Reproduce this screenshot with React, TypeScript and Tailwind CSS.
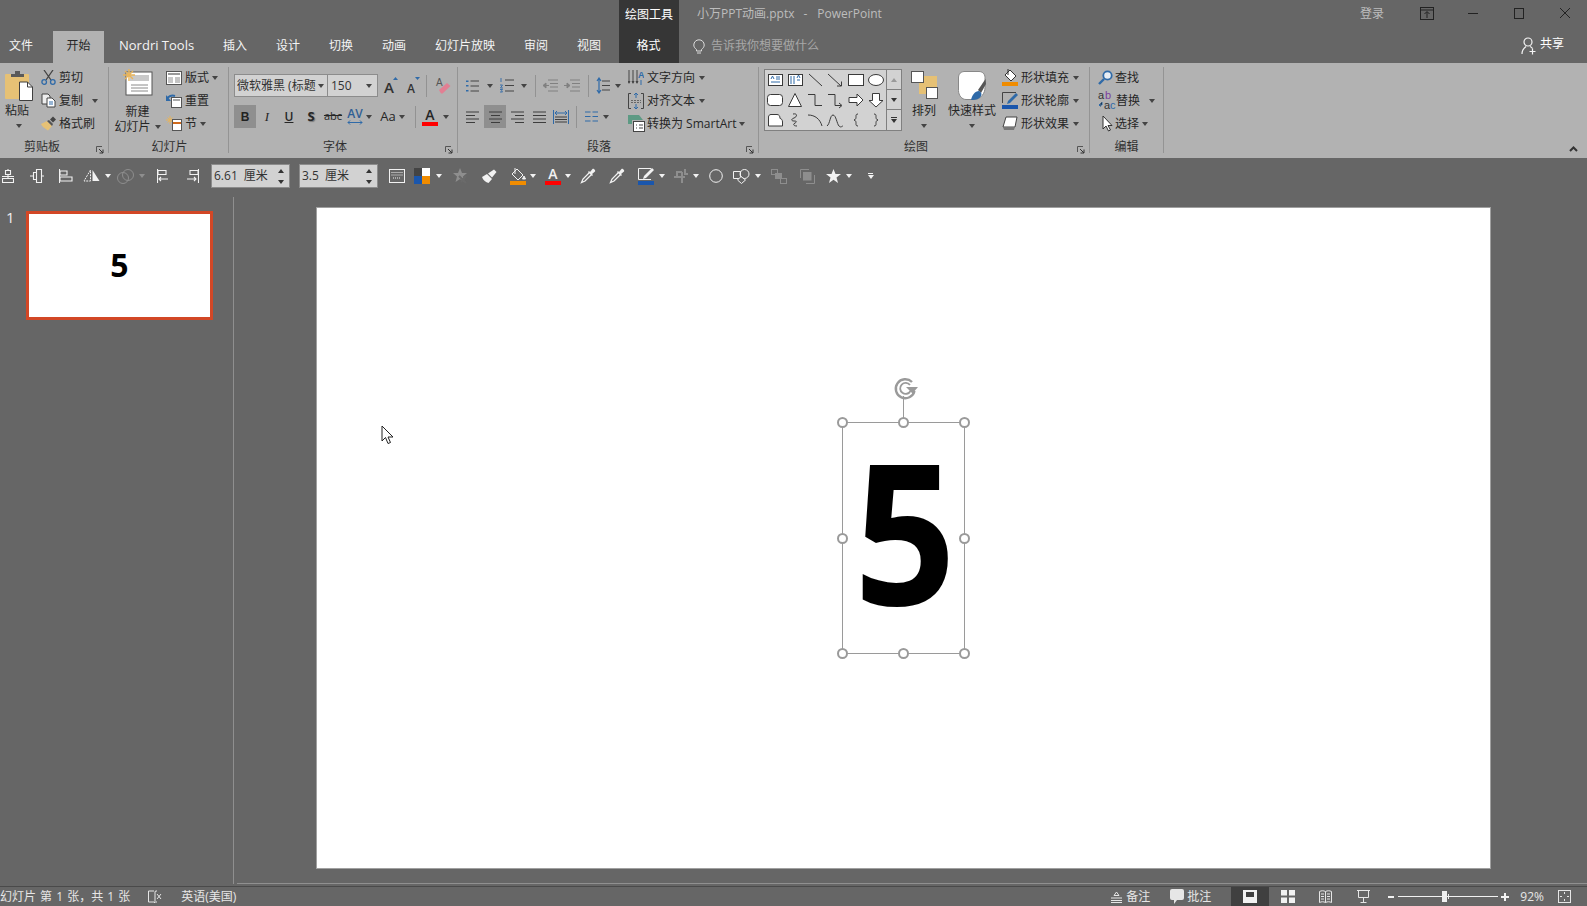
import React from "react";

type P = { className?: string };
const D = "#3f3f3f";
const B = "#2f6aa8";
const T = "#e6c175";

const Caret = ({ className = "" }: P) => (
  <svg className={`w-[6px] h-[4px] shrink-0 ${className}`} viewBox="0 0 6 4"><path d="M0 0h6L3 4z" fill="currentColor" /></svg>
);
const Sep = ({ className = "" }: P) => <div className={`w-px h-[22px] bg-[#929292] shrink-0 ${className}`} />;

const Ic = ({ className = "", w, h, children }: P & { w: number; h: number; children: React.ReactNode }) => (
  <svg className={`shrink-0 ${className}`} viewBox={`0 0 ${w} ${h}`} fill="none">{children}</svg>
);

/* ---------- ribbon icons ---------- */
const Clipboard = () => (
  <Ic w={28} h={30} className="w-[28px] h-[30px]">
    <rect x="0" y="3" width="24" height="25" rx="1" fill={T} />
    <path d="M6 6V3h4V0h5v3h4v3z" fill="#5a5a5a" />
    <path d="M14.5 11h8l5 5v13.5h-13z" fill="#fff" stroke={D} />
    <path d="M22.5 11v5h5" stroke={D} />
  </Ic>
);
const Scissors = () => (
  <Ic w={15} h={15} className="w-[15px] h-[15px]">
    <path d="M3 0l7 10M12 0L5 10" stroke="#444" strokeWidth="1.3" />
    <circle cx="3.2" cy="12" r="2.3" stroke={B} strokeWidth="1.3" />
    <circle cx="11.8" cy="12" r="2.3" stroke={B} strokeWidth="1.3" />
  </Ic>
);
const Copy = () => (
  <Ic w={15} h={15} className="w-[15px] h-[15px]">
    <path d="M1 1h6l2 2v8H1z" fill="#eee" stroke="#444" />
    <path d="M6 5h5l3 3v6H6z" fill="#fff" stroke="#444" />
    <path d="M8 9h4M8 11h4" stroke={B} />
  </Ic>
);
const Painter = () => (
  <Ic w={16} h={15} className="w-[16px] h-[15px]">
    <path d="M0 8l6-3 5 5-4 4.5C5 13 1 11 0 8z" fill={T} />
    <path d="M6 5l5 5 1-2-4-4z" fill="#555" />
    <path d="M9 3.5l3-3 3 3-3 3z" fill="#444" />
  </Ic>
);
const NewSlide = () => (
  <Ic w={30} h={27} className="w-[30px] h-[27px]">
    <rect x="3" y="3" width="26" height="23" fill="#fff" stroke="#555" />
    <rect x="7" y="6" width="19" height="6" fill="#c9c9c9" />
    <path d="M8 16h17M8 19h17M8 22h17" stroke="#8a8a8a" />
    <path d="M6 0v12M0 6h12M2 2l8 8M10 2l-8 8" stroke="#e8b45a" strokeWidth="1.4" />
  </Ic>
);
const Layout = () => (
  <Ic w={16} h={14} className="w-[16px] h-[14px]">
    <rect x=".5" y=".5" width="15" height="13" fill="#fff" stroke="#555" />
    <path d="M2 3h12" stroke="#999" strokeWidth="2" />
    <path d="M2 6h5v6H2z" fill="#c8c8c8" />
    <path d="M9 7h5M9 9h5M9 11h5" stroke="#888" />
  </Ic>
);
const Reset = () => (
  <Ic w={16} h={14} className="w-[16px] h-[14px]">
    <rect x="5.5" y="3.5" width="10" height="10" fill="#fff" stroke="#555" />
    <path d="M7 6h7" stroke="#aaa" strokeWidth="2" />
    <path d="M1 5c1-3 5-4 8-3" stroke={B} strokeWidth="2" />
    <path d="M0 1v6h5z" fill={B} />
  </Ic>
);
const Section = () => (
  <Ic w={16} h={15} className="w-[16px] h-[15px]">
    <path d="M4 0v8M0 4h8M1.500 1.500l5 5M6.500 1.500l-5 5" stroke="#e8b45a" />
    <rect x="6.500" y="3.500" width="9" height="11" fill="#fff" stroke="#555" />
    <path d="M7 7h8" stroke="#d06a1c" strokeWidth="2" />
  </Ic>
);
const GrowA = ({ up = true, small = false }: { up?: boolean; small?: boolean }) => (
  <div className={`relative shrink-0 text-[#333] ${small ? "w-[12px] text-[12px]" : "w-[13px] text-[15px]"} font-semibold leading-none flex items-end h-[19px]`}>
    A
    <svg className="absolute right-[-1px] top-[1px] w-[5px] h-[3px]" viewBox="0 0 5 3"><path d={up ? "M0 3h5L2.500 0z" : "M0 0h5L2.500 3z"} fill={B} /></svg>
  </div>
);
const Eraser = () => (
  <Ic w={16} h={17} className="w-[16px] h-[17px]">
    <text x="1" y="9" fontSize="10" fill="#555" fontFamily="Liberation Sans">A</text>
    <path d="M4 13l8-7 3.500 3-8 7.500H6z" fill="#e27f93" />
  </Ic>
);
const Bullets = () => (
  <Ic w={13} h={14} className="w-[13px] h-[14px]">
    <path d="M0 1.500h2.500V3H0zM0 6h2.500v1.500H0zM0 11h2.500v1.500H0z" fill={B} />
    <path d="M4.500 2h8.500M4.500 7h8.500M4.500 12h8.500" stroke="#444" />
  </Ic>
);
const Numbered = () => (
  <Ic w={14} h={15} className="w-[14px] h-[15px]">
    <path d="M1 0v4M0 7h2.500l-2 3h2.500M0 11.500h2.500l-1 1.300 1 1.200H0" stroke={B} strokeWidth=".9" />
    <path d="M5 2h9M5 7.500h9M5 13h9" stroke="#444" />
  </Ic>
);
const Indent = ({ flip = false }: { flip?: boolean }) => (
  <Ic w={16} h={13} className="w-[16px] h-[13px]">
    <path d="M6 1h10M8 4.500h8M8 8h8M6 12h10" stroke="#808080" />
    {flip ? <path d="M0 6.500h5M3 4l3 2.500-3 2.500z" stroke="#808080" fill="#808080" /> : <path d="M2 6.500h5M4 4L1 6.500 4 9z" stroke="#808080" fill="#808080" />}
  </Ic>
);
const Spacing = () => (
  <Ic w={14} h={17} className="w-[14px] h-[17px]">
    <path d="M3 1v15M1 4l2-3 2 3M1 13l2 3 2-3" stroke={B} strokeWidth="1.200" />
    <path d="M6 4h8M6 8.500h8M6 13h8" stroke="#444" />
  </Ic>
);
const Align = ({ kind }: { kind: "l" | "c" | "r" | "j" }) => {
  const d = {
    l: "M0 1h13M0 4.500h9M0 8h13M0 11.500h9",
    c: "M0 1h13M2 4.500h9M0 8h13M2 11.500h9",
    r: "M0 1h13M4 4.500h9M0 8h13M4 11.500h9",
    j: "M0 1h13M0 4.500h13M0 8h13M0 11.500h13",
  }[kind];
  return <Ic w={13} h={12} className="w-[13px] h-[12px]"><path d={d} stroke="#3d3d3d" /></Ic>;
};
const Distribute = () => (
  <Ic w={16} h={14} className="w-[16px] h-[14px]">
    <path d="M.500 0v14M15.500 0v14" stroke={B} />
    <path d="M2 3h12M4 1l-2 2 2 2M12 1l2 2-2 2" stroke={B} />
    <path d="M2 7h12M2 9.500h12M2 12h12" stroke="#3d3d3d" />
  </Ic>
);
const Columns = () => (
  <Ic w={13} h={11} className="w-[13px] h-[11px]">
    <path d="M0 1h5.500M7.500 1H13M0 5.500h5.500M7.500 5.500H13M0 10h5.500M7.500 10H13" stroke={B} strokeWidth="1.200" />
  </Ic>
);
const TextDir = () => (
  <Ic w={16} h={16} className="w-[16px] h-[16px]">
    <path d="M1 0v13M5 0v13M9 0v13" stroke="#444" />
    <path d="M-.500 11L1 14l1.500-3M3.500 11L5 14l1.500-3M7.500 11L9 14l1.500-3" fill="#444" />
    <text x="10" y="8" fontSize="9" fontWeight="700" fill={B} fontFamily="Liberation Sans">A</text>
    <path d="M13 10v5" stroke={B} />
  </Ic>
);
const TextAlign = () => (
  <Ic w={16} h={16} className="w-[16px] h-[16px]">
    <path d="M3 .500H.500v15H3M13 .500h2.500v15H13" stroke="#444" />
    <path d="M3 7.500h10M3 9.500h10" stroke="#666" strokeDasharray="2 1" />
    <path d="M8 0v5M6 2l2-2 2 2M8 16v-5M6 14l2 2 2-2" stroke={B} />
  </Ic>
);
const SmartArt = () => (
  <Ic w={17} h={17} className="w-[17px] h-[17px]">
    <path d="M0 0h11l4 5H0z" fill="#5d9a84" />
    <path d="M0 5h4v4H0z" fill="#5d9a84" />
    <rect x="5.500" y="6.500" width="11" height="10" fill="#fff" stroke="#444" />
    <path d="M8 10h1M11 10h4M8 13h1M11 13h4" stroke="#444" />
  </Ic>
);
const Arrange = () => (
  <Ic w={27} h={28} className="w-[27px] h-[28px]">
    <rect x="8" y="5" width="18" height="18" fill={T} />
    <rect x=".5" y=".5" width="12" height="11" fill="#fff" stroke="#555" />
    <rect x="15.500" y="16.500" width="11" height="11" fill="#fff" stroke="#555" />
  </Ic>
);
const QuickStyle = () => (
  <Ic w={28} h={30} className="w-[28px] h-[30px]">
    <path d="M6 .5h15c3 0 6 2 6 6v10c0 6-4 11-10 12H8c-4 0-7.500-4-7.500-9V6C.5 3 3 .5 6 .5z" fill="#fff" stroke="#888" />
    <path d="M27.500 8L20 19l3 3 5-9z" fill="#555" />
    <path d="M13 29c1-5 4-9 8-9 2.500 1 3 3 2 5-1.500 3-5 4-10 4z" fill={B} />
  </Ic>
);
const ShapeFill = () => (
  <Ic w={16} h={17} className="w-[16px] h-[17px]">
    <path d="M8 1l6 6-5 5-6-6z" fill="#fff" stroke="#333" />
    <path d="M6 0v6" stroke="#333" />
    <rect y="13" width="16" height="4" fill="#f08c00" />
  </Ic>
);
const ShapeLine = () => (
  <Ic w={16} h={17} className="w-[16px] h-[17px]">
    <path d="M14 .5H.5V11" stroke="#444" />
    <path d="M14 1L6 9l-1 3 3-1 8-8z" fill={B} />
    <rect y="13" width="16" height="4" fill="#1a56ac" />
  </Ic>
);
const ShapeEffect = () => (
  <Ic w={16} h={15} className="w-[16px] h-[15px]">
    <path d="M4 1h11l-2 10H1z" fill="#fff" stroke="#444" />
    <path d="M1 11h12l-1 3H2z" fill="#777" />
  </Ic>
);
const Find = () => (
  <Ic w={15} h={15} className="w-[15px] h-[15px]">
    <circle cx="9.500" cy="5.500" r="4.200" fill="#e8eef5" stroke={B} strokeWidth="1.800" />
    <path d="M6 9l-5 5" stroke={B} strokeWidth="2.400" />
  </Ic>
);
const Replace = () => (
  <div className="relative w-[17px] h-[19px] shrink-0 text-[11px] leading-[9px] font-['Liberation_Sans',sans-serif]">
    <span className="absolute left-0 top-0 text-[#333]">a</span>
    <span className="absolute left-[7px] top-0 text-[#7a3ea0]">b</span>
    <span className="absolute left-[6px] top-[10px] text-[#333]">a</span>
    <span className="absolute left-[12px] top-[10px] text-[#2f6aa8]">c</span>
    <svg className="absolute left-0 top-[11px] w-[5px] h-[6px]" viewBox="0 0 5 6"><path d="M4 0v3H1M2.500 1.500L1 3l1.500 1.500" stroke={B} /></svg>
  </div>
);
const Pointer = () => (
  <Ic w={11} h={17} className="w-[11px] h-[17px]">
    <path d="M1 1v13l3-3 2.500 5 2-1L6 10.500h4z" fill="#fff" stroke="#333" />
  </Ic>
);
const Launcher = () => (
  <svg className="absolute right-[4px] -bottom-[1px] w-[8px] h-[8px]" viewBox="0 0 8 8" fill="none">
    <path d="M.5 6V.5H6" stroke="#555" />
    <path d="M3 3l4 4M7 3.500V7H3.500" stroke="#333" />
  </svg>
);

/* ---------- gallery ---------- */
const gs = { stroke: "#3a3a3a", fill: "#fff" };
const shapes: React.ReactNode[] = [
  <><rect x="3.500" y="4.500" width="14" height="11" {...gs} /><path d="M6 9l1.500-3L9 9M11 7h4M11 9h4M6 12h9" stroke="#2f6aa8" /></>,
  <><rect x="3.500" y="4.500" width="14" height="11" {...gs} /><path d="M6 6v8M9 6v8M12 8l1.500-3L15 8M12 10h3" stroke="#2f6aa8" /></>,
  <path d="M4 4l13 12" stroke="#3a3a3a" />,
  <><path d="M3 4l13 12" stroke="#3a3a3a" /><path d="M12 16h4.500v-4.500" stroke="#3a3a3a" /></>,
  <rect x="2.500" y="4.500" width="15" height="11" {...gs} />,
  <ellipse cx="10" cy="10" rx="7.500" ry="5.500" {...gs} />,
  <rect x="2.500" y="4.500" width="15" height="11" rx="3" {...gs} />,
  <path d="M10 3.500l6.500 13h-13z" {...gs} />,
  <path d="M3 4.500h7v11h7" stroke="#3a3a3a" />,
  <><path d="M3 4.500h7v11h6" stroke="#3a3a3a" /><path d="M14 13l3 2.500-3 2.500" stroke="#3a3a3a" /></>,
  <path d="M3 7.500h8V4l6 6-6 6v-3.500H3z" {...gs} />,
  <path d="M6.500 3.500h7v7H17l-7 6.500-7-6.500h3.500z" {...gs} />,
  <path d="M3.500 16V7c0-1.500 1-2.500 2.500-2.500h6c2 0 3 1.500 3 4 1 0 2.500 1 2.500 3.500v4z" {...gs} />,
  <path d="M8 4c5-1 4 3 1 4-3 1-3 3 0 3s3 1 1 2-2 3 2 3" stroke="#3a3a3a" />,
  <path d="M3 5c7 0 12 4 14 11" stroke="#3a3a3a" />,
  <path d="M2 16c3-2 3-11 6-11s4 9 6 11 3 0 4 0" stroke="#3a3a3a" />,
  <path d="M12 4c-2 0-2 1-2 2.500S10 9.500 8 10c2 .5 2 2 2 3.500s0 2.500 2 2.500" stroke="#3a3a3a" />,
  <path d="M8 4c2 0 2 1 2 2.500s0 3 2 3.500c-2 .5-2 2-2 3.500s0 2.500-2 2.500" stroke="#3a3a3a" />,
];

/* ---------- format-bar icons ---------- */
const W = "#f2f2f2";
const G = "#8e8e8e";
const AlignIcon = ({ d, className, vb = 14 }: { d: string; className: string; vb?: number }) => (
  <Ic w={vb} h={14} className={className}><path d={d} stroke={W} strokeWidth="1.100" /></Ic>
);
const Dropper = ({ className }: { className: string }) => (
  <Ic w={16} h={16} className={className}>
    <path d="M9.500 4.500L3 11l-1.500 3.500L5 13l6.500-6.500" stroke={W} strokeWidth="1.300" />
    <path d="M9 3l1 1 2.500-3c1-1 3.500 1.500 2.500 2.500L12 6l1 1-1 1-4-4z" fill={W} />
  </Ic>
);
const Txt = ({ className = "", children }: P & { children: React.ReactNode }) => <span className={`whitespace-nowrap ${className}`}>{children}</span>;

const Row = ({ className = "", children }: P & { children: React.ReactNode }) => (
  <div className={`flex items-center ${className}`}>{children}</div>
);

const Group = ({ w, label, labelClass = "", launcher = false, children }: { w: string; label: string; labelClass?: string; launcher?: boolean; children: React.ReactNode }) => (
  <div className={`relative flex flex-col shrink-0 h-[86px] border-r border-[#949494] ${w}`}>
    <div className="flex h-[70px]">{children}</div>
    <div className={`h-[16px] pt-[1px] leading-[17px] text-center text-[12px] text-[#303030] ${labelClass}`}>{label}</div>
    {launcher && <Launcher />}
  </div>
);

const Handle = ({ className }: { className: string }) => (
  <div className={`absolute w-[11px] h-[11px] rounded-full bg-white border-2 border-[#9a9a9a] ${className}`} />
);

const Spin = () => (
  <div className="flex flex-col gap-[7px]"><Caret className="rotate-180 text-[#333] w-[5px] h-[3px]" /><Caret className="text-[#333] w-[5px] h-[3px]" /></div>
);

export default function App() {
  return (
    <div className="flex flex-col w-[1587px] h-[906px] overflow-hidden bg-[#666666] text-[12px] font-['Open_Sans','Noto_Sans_CJK_SC',sans-serif]">
      {/* title row */}
      <div className="flex h-[31px] shrink-0">
        <div className="w-[619px] shrink-0" />
        <div className="w-[60px] bg-[#363636] text-white text-center leading-[29px]">绘图工具</div>
        <div className="ml-[18px] leading-[28px] text-[#bdbdbd] whitespace-pre">
          <span>小万PPT动画.pptx</span><span className="ml-[9px]">-</span><span className="ml-[10px]">PowerPoint</span>
        </div>
        <div className="ml-auto flex items-start text-[#bdbdbd]">
          <span className="leading-[27px]">登录</span>
          <svg className="ml-[36px] mt-[7px] w-[14px] h-[13px]" viewBox="0 0 14 13" fill="none"><rect x=".5" y=".5" width="13" height="12" stroke="#222" /><path d="M1 3h12" stroke="#222" /><path d="M7 11V5M4.500 7L7 4.500 9.500 7" stroke="#222" /></svg>
          <svg className="ml-[34px] mt-[13px] w-[10px] h-[1px]" viewBox="0 0 10 1"><path d="M0 .5h10" stroke="#222" /></svg>
          <svg className="ml-[36px] mt-[8px] w-[10px] h-[11px]" viewBox="0 0 10 11" fill="none"><rect x=".5" y=".5" width="9" height="10" stroke="#222" /></svg>
          <svg className="ml-[36px] mr-[17px] mt-[8px] w-[10px] h-[10px]" viewBox="0 0 10 10" fill="none"><path d="M0 0l10 10M10 0L0 10" stroke="#222" /></svg>
        </div>
      </div>

      {/* tab row */}
      <div className="flex h-[32px] shrink-0 text-[#f4f4f4] leading-[29px]">
        <div className="w-[53px] pl-[9px]">文件</div>
        <div className="w-[51px] bg-[#b2b2b2] text-[#262626] text-center">开始</div>
        <div className="ml-[15px] w-[75px] text-[13px] whitespace-nowrap">Nordri Tools</div>
        <div className="ml-[29px] w-[24px]">插入</div>
        <div className="ml-[29px] w-[24px]">设计</div>
        <div className="ml-[29px] w-[24px]">切换</div>
        <div className="ml-[29px] w-[24px]">动画</div>
        <div className="ml-[29px] w-[60px]">幻灯片放映</div>
        <div className="ml-[29px] w-[24px]">审阅</div>
        <div className="ml-[29px] w-[24px]">视图</div>
        <div className="ml-[18px] w-[60px] pr-[1px] bg-[#363636] text-center text-white">格式</div>
        <svg className="ml-[14px] mt-[8px] w-[12px] h-[16px]" viewBox="0 0 12 16" fill="none"><path d="M3.500 10.500C1.500 9 .8 7.500.8 6A5.200 5.200 0 0 1 11.200 6c0 1.500-.7 3-2.700 4.500v1.500h-5z" stroke="#dcdcdc" /><path d="M4 14h4" stroke="#dcdcdc" /></svg>
        <div className="ml-[6px] text-[#a8a8a8]">告诉我你想要做什么</div>
        <div className="ml-auto flex items-start text-white pr-[23px]">
          <svg className="mt-[6px] w-[15px] h-[18px]" viewBox="0 0 15 18" fill="none"><circle cx="7" cy="5" r="4" stroke="#f4f4f4" strokeWidth="1.200" /><path d="M1 17c0-4 2-6 4-7.500M9 9.500c1 .5 2 1.200 2.500 2" stroke="#f4f4f4" strokeWidth="1.200" /><path d="M11.500 11.500v6M8.500 14.500h6" stroke="#f4f4f4" strokeWidth="1.200" /></svg>
          <span className="ml-[4px] leading-[26px]">共享</span>
        </div>
      </div>

      {/* ribbon */}
      <div className="relative flex h-[95px] shrink-0 pt-[4px] bg-[#b2b2b2] text-[#262626]">
        <Group w="w-[109px]" label="剪贴板" labelClass="pr-[24px]" launcher>
          <div className="flex flex-col items-start w-[39px] pl-[5px] mt-[4px]">
            <Clipboard />
            <span className="mt-[1px] leading-[17px]">粘贴</span>
            <Caret className="mt-[5px] ml-[11px] text-[#444]" />
          </div>
          <div className="flex flex-col -mt-[1px] ml-[2px]">
            <Row className="h-[23px]"><Scissors /><Txt className="ml-[3px]">剪切</Txt></Row>
            <Row className="h-[23px]"><Copy /><Txt className="ml-[3px]">复制</Txt><Caret className="ml-[9px] text-[#444]" /></Row>
            <Row className="h-[23px]"><Painter /><Txt className="ml-[2px]">格式刷</Txt></Row>
          </div>
        </Group>

        <Group w="w-[120px]" label="幻灯片" labelClass="pl-[2px]">
          <div className="flex flex-col items-center w-[57px] mt-[2px]">
            <NewSlide />
            <span className="mt-[7px] leading-[17px]">新建</span>
            <div className="flex items-center leading-[15px] mt-[-1px]">幻灯片<Caret className="ml-[4px] text-[#444]" /></div>
          </div>
          <div className="flex flex-col -mt-[1px]">
            <Row className="h-[23px]"><Layout /><Txt className="ml-[3px]">版式</Txt><Caret className="ml-[3px] text-[#444]" /></Row>
            <Row className="h-[23px]"><Reset /><Txt className="ml-[3px]">重置</Txt></Row>
            <Row className="h-[23px]"><Section /><Txt className="ml-[3px]">节</Txt><Caret className="ml-[3px] text-[#444]" /></Row>
          </div>
        </Group>

        <Group w="w-[229px]" label="字体" labelClass="pr-[16px]" launcher>
          <div className="flex flex-col pl-[5px] pt-[7px]">
            <Row className="h-[23px]">
              <div className="flex items-center w-[94px] h-[23px] pl-[2px] pr-[3px] bg-[#d2d2d2] border border-[#8c8c8c] overflow-hidden">
                <span className="flex-1 overflow-hidden whitespace-nowrap text-[12px] text-[#333]">微软雅黑 (标题</span><Caret className="text-[#444]" />
              </div>
              <div className="flex items-center w-[50px] h-[23px] pl-[3px] pr-[5px] bg-[#d2d2d2] border border-[#8c8c8c] border-l-0">
                <span className="flex-1 text-[#333]">150</span><Caret className="text-[#444]" />
              </div>
              <div className="ml-[6px]"><GrowA /></div>
              <div className="ml-[10px]"><GrowA up={false} small /></div>
              <Sep className="ml-[7px]" />
              <div className="ml-[8px]"><Eraser /></div>
            </Row>
            <Row className="h-[23px] mt-[8px]">
              <div className="w-[22px] h-[23px] bg-[#8f8f8f] flex items-center justify-center font-bold font-['Liberation_Sans',sans-serif] text-[#222]">B</div>
              <div className="w-[22px] text-center italic font-['Liberation_Serif',serif] text-[13px]">I</div>
              <div className="w-[22px] text-center underline font-semibold">U</div>
              <div className="w-[22px] text-center font-bold text-[13px] [text-shadow:1px_1px_1px_#777]">S</div>
              <div className="w-[22px] text-center line-through text-[11px]">abc</div>
              <div className="w-[22px] flex flex-col items-center">
                <span className="leading-[12px] text-[12px] font-semibold text-[#2f5f95]">AV</span>
                <svg className="w-[16px] h-[5px]" viewBox="0 0 16 5" fill="none"><path d="M1 2.500h14M3 .5l-2 2 2 2M13 .5l2 2-2 2" stroke={B} /></svg>
              </div>
              <Caret className="text-[#444]" />
              <div className="ml-[5px] w-[22px] text-center text-[13px]">Aa</div>
              <Caret className="text-[#444]" />
              <Sep className="ml-[10px]" />
              <div className="ml-[6px] w-[16px] flex flex-col items-center">
                <span className="leading-[14px] text-[14px] font-semibold">A</span>
                <div className="w-[16px] h-[4px] bg-[#f00]" />
              </div>
              <Caret className="ml-[5px] text-[#444]" />
            </Row>
          </div>
        </Group>

        <Group w="w-[301px]" label="段落" labelClass="pr-[18px]" launcher>
          <div className="flex flex-col pt-[7px] w-[163px] shrink-0">
            <Row className="h-[23px]">
              <div className="ml-[8px]"><Bullets /></div>
              <Caret className="ml-[8px] text-[#444]" />
              <div className="ml-[7px]"><Numbered /></div>
              <Caret className="ml-[7px] text-[#444]" />
              <Sep className="ml-[8px]" />
              <div className="ml-[6px]"><Indent /></div>
              <div className="ml-[6px]"><Indent flip /></div>
              <Sep className="ml-[8px]" />
              <div className="ml-[7px]"><Spacing /></div>
              <Caret className="ml-[5px] text-[#444]" />
            </Row>
            <Row className="h-[23px] mt-[8px]">
              <div className="ml-[8px]"><Align kind="l" /></div>
              <div className="ml-[5px] w-[22px] h-[23px] bg-[#8f8f8f] flex items-center justify-center"><Align kind="c" /></div>
              <div className="ml-[5px]"><Align kind="r" /></div>
              <div className="ml-[9px]"><Align kind="j" /></div>
              <div className="ml-[7px]"><Distribute /></div>
              <Sep className="ml-[7px]" />
              <div className="ml-[8px]"><Columns /></div>
              <Caret className="ml-[5px] text-[#444]" />
            </Row>
          </div>
          <div className="flex flex-col -mt-[1px] ml-[7px]">
            <Row className="h-[23px]"><TextDir /><Txt className="ml-[3px]">文字方向</Txt><Caret className="ml-[4px] text-[#444]" /></Row>
            <Row className="h-[23px]"><TextAlign /><Txt className="ml-[3px]">对齐文本</Txt><Caret className="ml-[4px] text-[#444]" /></Row>
            <Row className="h-[23px]"><SmartArt /><Txt className="ml-[2px]">转换为 SmartArt</Txt><Caret className="ml-[3px] text-[#444]" /></Row>
          </div>
        </Group>

        <Group w="w-[331px]" label="绘图" labelClass="pr-[16px]" launcher>
          <div className="flex ml-[5px] mt-[2px] w-[138px] h-[62px] bg-[#d2d2d2] border border-[#808080] shrink-0">
            <div className="grid grid-cols-6 grid-rows-3 w-[121px]">
              {shapes.map((s, i) => (
                <svg key={i} className="w-[20px] h-[20px]" viewBox="0 0 20 20" fill="none">{s}</svg>
              ))}
            </div>
            <div className="flex flex-col flex-1 border-l border-[#808080]">
              <div className="flex items-center justify-center h-[20px] border-b border-[#808080]"><Caret className="rotate-180 text-[#9a9a9a]" /></div>
              <div className="flex items-center justify-center h-[20px] border-b border-[#808080]"><Caret className="text-[#333]" /></div>
              <div className="flex flex-col items-center justify-center flex-1"><div className="w-[6px] h-px bg-[#333] mb-[1px]" /><Caret className="text-[#333]" /></div>
            </div>
          </div>
          <div className="flex flex-col items-center w-[40px] ml-[2px] mt-[4px]">
            <Arrange />
            <span className="mt-[3px] leading-[17px]">排列</span>
            <Caret className="mt-[5px] text-[#444]" />
          </div>
          <div className="flex flex-col items-center w-[48px] ml-[4px] mt-[4px]">
            <QuickStyle />
            <span className="mt-[1px] leading-[17px] whitespace-nowrap">快速样式</span>
            <Caret className="mt-[5px] text-[#444]" />
          </div>
          <div className="flex flex-col -mt-[1px] ml-[6px]">
            <Row className="h-[23px]"><ShapeFill /><Txt className="ml-[3px]">形状填充</Txt><Caret className="ml-[4px] text-[#444]" /></Row>
            <Row className="h-[23px]"><ShapeLine /><Txt className="ml-[3px]">形状轮廓</Txt><Caret className="ml-[4px] text-[#444]" /></Row>
            <Row className="h-[23px]"><ShapeEffect /><Txt className="ml-[3px]">形状效果</Txt><Caret className="ml-[4px] text-[#444]" /></Row>
          </div>
        </Group>

        <Group w="w-[74px]" label="编辑">
          <div className="flex flex-col -mt-[1px] ml-[8px]">
            <Row className="h-[23px]"><Find /><Txt className="ml-[2px]">查找</Txt></Row>
            <Row className="h-[23px]"><Replace /><Txt className="ml-[1px]">替换</Txt><Caret className="ml-[9px] text-[#444]" /></Row>
            <Row className="h-[23px] pl-[4px]"><Pointer /><Txt className="ml-[2px]">选择</Txt><Caret className="ml-[3px] text-[#444]" /></Row>
          </div>
        </Group>
        <svg className="absolute right-[9px] bottom-[6px] w-[9px] h-[6px]" viewBox="0 0 9 6" fill="none"><path d="M1 5l3.500-3.500L8 5" stroke="#333" strokeWidth="2" /></svg>
      </div>

      {/* format bar */}
      <div className="flex items-center h-[39px] pb-[3px] shrink-0 text-[#f2f2f2]">
        <AlignIcon vb={12} className="ml-[2px] w-[12px] h-[14px]" d="M3.500 1.500h5v4h-5zM6 0v1.500M.5 9.500h11v4H.5zM6 5.500v4M0 7.500h12" />
        <AlignIcon className="ml-[16px] w-[14px] h-[14px]" d="M0 7h3M3.500 3.500h3v7h-3zM6.500 .5h5v13h-5zM11.500 7H14" />
        <AlignIcon className="ml-[15px] w-[14px] h-[14px]" d="M.5 0v14M1 2h7v4H1zM1 8h12v4H1z" />
        <Ic w={17} h={14} className="ml-[10px] w-[17px] h-[14px]">
          <path d="M7.500 1L1 12h6.500z" stroke={W} strokeDasharray="2 1" />
          <path d="M9.500 1L16.500 12h-7z" fill={W} />
        </Ic>
        <Caret className="ml-[5px]" />
        <Ic w={17} h={15} className="ml-[6px] w-[17px] h-[15px]">
          <circle cx="6" cy="9" r="5.500" stroke={G} /><circle cx="11" cy="6" r="5.500" stroke={G} />
        </Ic>
        <Caret className="ml-[5px] text-[#8e8e8e]" />
        <AlignIcon vb={11} className="ml-[12px] w-[11px] h-[14px]" d="M.5 0v14M1 1.500h8v4H1zM11 10H2M4 8l-2 2 2 2" />
        <AlignIcon vb={12} className="ml-[19px] w-[12px] h-[14px]" d="M11.500 0v14M11 1.500H3v4h8zM0 10h9M7 8l2 2-2 2" />
        <div className="ml-[12px] flex items-center w-[79px] h-[24px] pl-[2px] pr-[5px] bg-[#d2d2d2] border border-[#8c8c8c] text-[#333]">
          <span className="flex-1 whitespace-pre [word-spacing:3px]">6.61 厘米</span>
          <Spin />
        </div>
        <div className="ml-[9px] flex items-center w-[79px] h-[24px] pl-[2px] pr-[5px] bg-[#d2d2d2] border border-[#8c8c8c] text-[#333]">
          <span className="flex-1 whitespace-pre [word-spacing:3px]">3.5 厘米</span>
          <Spin />
        </div>
        <Ic w={16} h={14} className="ml-[11px] w-[16px] h-[14px]">
          <rect x=".5" y=".5" width="15" height="13" stroke={W} />
          <path d="M2.500 3.500h11M2.500 6h11M4 9h8" stroke={W} strokeDasharray="1 1" />
        </Ic>
        <Ic w={16} h={16} className="ml-[9px] w-[16px] h-[16px]">
          <rect width="8" height="8" fill="#444" /><rect x="8" width="8" height="8" fill="#fff" />
          <rect y="8" width="8" height="8" fill="#1a56ac" /><rect x="8" y="8" width="8" height="8" fill="#f08c00" />
        </Ic>
        <Caret className="ml-[6px]" />
        <Ic w={16} h={16} className="ml-[10px] w-[16px] h-[16px]">
          <path d="M8 0l2 5h5l-4 3.500L12.500 14 8 11l-4.500 3L5 8.500 1 5h5z" fill={G} />
          <path d="M7 8l7 7M14 8l-5 6" stroke="#6a6a6a" strokeWidth="2" />
        </Ic>
        <Ic w={15} h={14} className="ml-[14px] w-[15px] h-[14px]">
          <path d="M0 8l5-3 5 5-3.500 4C4 13.500 1 11 0 8z" fill={W} />
          <path d="M6 4.500l4 4L14.500 3 12 .5z" fill={W} />
        </Ic>
        <Ic w={16} h={17} className="ml-[13px] w-[16px] h-[17px]">
          <path d="M7 1l6 6-5 5-6-6z" stroke={W} /><path d="M5 0v6M14 8l1.500 3h-3z" stroke={W} fill={W} />
          <rect y="13" width="16" height="4" fill="#f08c00" />
        </Ic>
        <Caret className="ml-[4px]" />
        <div className="ml-[9px] w-[16px] flex flex-col items-center">
          <span className="leading-[14px] text-[14px] font-semibold text-[#f2f2f2]">A</span>
          <div className="w-[16px] h-[4px] bg-[#f00]" />
        </div>
        <Caret className="ml-[4px]" />
        <Dropper className="ml-[9px] w-[16px] h-[16px]" />
        <Dropper className="ml-[13px] w-[16px] h-[16px]" />
        <Ic w={16} h={17} className="ml-[13px] w-[16px] h-[17px]">
          <path d="M13 .5H.5V11.500H13" stroke={W} /><path d="M14 0l2 2-8 8-3 1 1-3z" fill={W} />
          <rect y="13" width="16" height="4" fill="#1a56ac" />
        </Ic>
        <Caret className="ml-[5px]" />
        <Ic w={14} h={14} className="ml-[9px] w-[14px] h-[14px]">
          <path d="M0 8h11M8 3v11M3 8V3h5" stroke={G} strokeWidth="2" />
          <path d="M11 0v5h3" stroke={G} strokeWidth="2" />
        </Ic>
        <Caret className="ml-[5px]" />
        <Ic w={14} h={14} className="ml-[10px] w-[14px] h-[14px]"><circle cx="7" cy="7" r="6.300" stroke={W} /></Ic>
        <Ic w={17} h={15} className="ml-[10px] w-[17px] h-[15px]">
          <path d="M.5 2.500h7v7h-7z" stroke={W} /><circle cx="11.500" cy="5" r="4.500" stroke={W} /><path d="M8 7.500l4.500 3.500-4 3.500-4-3.500z" fill="#666" stroke={W} />
        </Ic>
        <Caret className="ml-[5px]" />
        <Ic w={16} h={15} className="ml-[10px] w-[16px] h-[15px]">
          <rect x=".5" y=".5" width="6" height="5" stroke={G} /><rect x="4.500" y="4.500" width="6" height="5" fill={G} stroke={G} /><rect x="9.500" y="9.500" width="6" height="5" stroke={G} />
        </Ic>
        <Ic w={15} h={15} className="ml-[13px] w-[15px] h-[15px]">
          <path d="M.5 9V.5H9" stroke={G} /><rect x="3" y="3" width="8.500" height="8.500" fill={G} /><path d="M14.500 6v8.500H6" stroke={G} />
        </Ic>
        <Ic w={15} h={14} className="ml-[11px] w-[15px] h-[14px]">
          <path d="M7.500 0l2 5h5.500l-4.500 3.500L12 14 7.500 10.800 3 14l1.500-5.500L0 5h5.500z" fill={W} />
        </Ic>
        <Caret className="ml-[5px]" />
        <div className="ml-[16px] flex flex-col items-center w-[5px]"><div className="w-[5px] h-px bg-[#f2f2f2] mb-[1px]" /><Caret className="w-[5px]" /></div>
      </div>

      {/* main */}
      <div className="flex flex-1 min-h-0">
        <div className="flex w-[234px] shrink-0 h-[687px] border-r border-[#8f8f8f] pt-[13px]">
          <div className="w-[26px] pl-[6px] text-[15px] leading-[14px] text-[#efefef]">1</div>
          <div className="flex items-center justify-center w-[187px] h-[109px] mt-[1px] bg-white border-[3px] border-[#d24726]">
            <span className="font-bold text-[32px] leading-none text-black mb-[2px]">5</span>
          </div>
        </div>
        <div className="flex flex-col flex-1 min-w-0">
          <div className="relative mt-[10px] ml-[82px] w-[1175px] h-[662px] bg-white border border-[#a0a0a0] shrink-0">
            <svg className="absolute left-[64px] top-[217px] w-[13px] h-[20px]" viewBox="0 0 13 20" fill="none">
              <path d="M1 1v15l3.500-3.500L7 18.500l2.500-1L7 12h5z" fill="#fff" stroke="#222" />
            </svg>
            <div className="absolute left-[525px] top-[214px] w-[123px] h-[232px] border border-[#9a9a9a] flex items-center justify-center">
              <span className="font-bold text-[196px] leading-none text-black ml-[4px] mb-[18px] scale-x-[0.91]">5</span>
              <Handle className="-left-[6px] -top-[6px]" />
              <Handle className="left-[55px] -top-[6px]" />
              <Handle className="-right-[6px] -top-[6px]" />
              <Handle className="-left-[6px] top-[110px]" />
              <Handle className="-right-[6px] top-[110px]" />
              <Handle className="-left-[6px] -bottom-[6px]" />
              <Handle className="left-[55px] -bottom-[6px]" />
              <Handle className="-right-[6px] -bottom-[6px]" />
              <div className="absolute left-[60px] -top-[27px] w-px h-[22px] bg-[#9a9a9a]" />
              <svg className="absolute left-[50px] -top-[46px] w-[26px] h-[24px]" viewBox="0 0 26 24" fill="none">
                <path d="M19 5a9.500 9.500 0 1 0 2.500 9" stroke="#9a9a9a" strokeWidth="2.400" />
                <path d="M17 8a5.500 5.500 0 1 0 .5 6" stroke="#9a9a9a" strokeWidth="1.800" />
                <path d="M13 10h12l-5.500 6.500z" fill="#9a9a9a" />
              </svg>
            </div>
          </div>
          <div className="mt-auto mb-[2px] ml-[3px] h-px bg-[#909090] shrink-0" />
        </div>
      </div>

      {/* status bar */}
      <div className="flex items-center h-[20px] shrink-0 border-t border-[#4a4a4a] text-[#e6e6e6] whitespace-pre">
        <span className="[word-spacing:1px]">幻灯片 第 1 张，共 1 张</span>
        <svg className="ml-[18px] w-[14px] h-[13px]" viewBox="0 0 14 13" fill="none"><path d="M6 1H.5v11H6l1 1V1.500M7 1.500L8 1h1M8 12h1" stroke="#e6e6e6" /><path d="M9 4l4 5M13 4L9 9" stroke="#e6e6e6" /></svg>
        <span className="ml-[19px]">英语(美国)</span>
        <svg className="ml-auto w-[11px] h-[12px]" viewBox="0 0 11 12" fill="none"><path d="M3 4.500L5.500 1 8 4.500zM0 7h11M0 9.500h11M0 11.500h11" stroke="#e6e6e6" /></svg>
        <span className="ml-[4px]">备注</span>
        <svg className="ml-[20px] w-[14px] h-[15px]" viewBox="0 0 14 15"><path d="M2 0h10a2 2 0 0 1 2 2v7a2 2 0 0 1-2 2H7l-3 4v-4H2a2 2 0 0 1-2-2V2a2 2 0 0 1 2-2z" fill="#e6e6e6" /></svg>
        <span className="ml-[3px]">批注</span>
        <div className="ml-[20px] flex items-center justify-center w-[38px] h-[19px] bg-[#404040]">
          <svg className="w-[14px] h-[13px]" viewBox="0 0 14 13"><path d="M0 0h14v13H0z" fill="#f2f2f2" /><path d="M3 2h8v5H3z" fill="#404040" /></svg>
        </div>
        <svg className="ml-[12px] w-[14px] h-[13px]" viewBox="0 0 14 13"><path d="M0 0h6v5.500H0zM8 0h6v5.500H8zM0 7.500h6V13H0zM8 7.500h6V13H8z" fill="#f2f2f2" /></svg>
        <svg className="ml-[24px] w-[13px] h-[13px]" viewBox="0 0 13 13" fill="none"><path d="M.5 1.500c2-1 4-1 6 0 2-1 4-1 6 0v11c-2-1-4-1-6 0-2-1-4-1-6 0zM6.500 1.500v11M2 4h3M2 6.500h3M2 9h3M8 4h3M8 6.500h3M8 9h3" stroke="#e6e6e6" /></svg>
        <svg className="ml-[25px] w-[13px] h-[13px]" viewBox="0 0 13 13" fill="none"><path d="M0 .5h13M1.500 1v6.500h10V1M6.500 8v4M3.500 12.500h6" stroke="#e6e6e6" /></svg>
        <div className="ml-[18px] w-[6px] h-[2px] bg-[#f2f2f2]" />
        <div className="relative ml-[4px] w-[100px] h-px bg-[#f2f2f2]">
          <div className="absolute left-[44px] -top-[5px] w-[5px] h-[11px] bg-[#f2f2f2]" />
          <div className="absolute left-[50px] -top-[2px] w-px h-[5px] bg-[#f2f2f2]" />
        </div>
        <svg className="ml-[3px] w-[8px] h-[8px]" viewBox="0 0 8 8"><path d="M3 0h2v3h3v2H5v3H3V5H0V3h3z" fill="#f2f2f2" /></svg>
        <span className="ml-[11px]">92%</span>
        <svg className="ml-[14px] mr-[16px] w-[13px] h-[13px]" viewBox="0 0 13 13" fill="none"><rect x=".5" y=".5" width="12" height="12" stroke="#e6e6e6" /><path d="M6.500 2v2M6.500 9v2M2 6.500h2M9 6.500h2" stroke="#e6e6e6" /></svg>
      </div>
    </div>
  );
}
